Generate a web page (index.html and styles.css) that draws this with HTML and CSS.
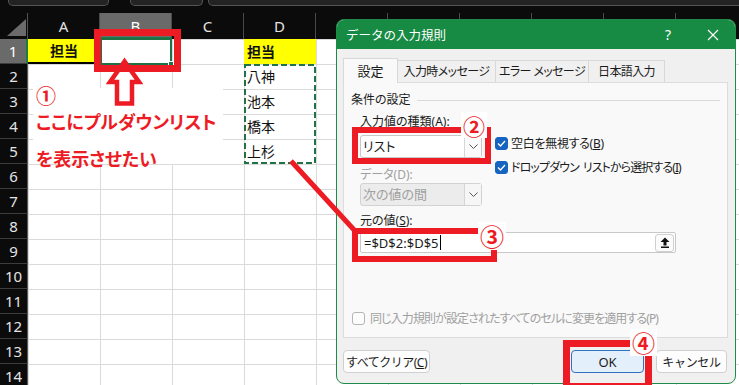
FILE: index.html
```html
<!DOCTYPE html>
<html lang="ja">
<head>
  <meta charset="UTF-8">
  <meta name="viewport" content="width=device-width, initial-scale=1.0">
  <link rel="stylesheet" href="styles.css">
  <title>データの入力規則</title>
</head>
<body>
  <div id="screen">
    <div class="ribbon-edge">
      <div class="ribbon-box box1"></div>
      <div class="ribbon-box box2"></div>
      <div class="ribbon-box box3"></div>
    </div>

    <div class="sheet">
      <div class="corner"><span class="corner-tri"></span></div>
      <div class="col-head">A</div>
      <div class="col-head selected">B</div>
      <div class="col-head">C</div>
      <div class="col-head">D</div>
      <!-- E..J sit under the dialog -->
      <div class="col-head"></div>
      <div class="col-head"></div>
      <div class="col-head"></div>
      <div class="col-head"></div>
      <div class="col-head"></div>
      <div class="col-head"></div>

      <div class="row-head selected">1</div>
      <div class="row-head">2</div>
      <div class="row-head">3</div>
      <div class="row-head">4</div>
      <div class="row-head">5</div>
      <div class="row-head">6</div>
      <div class="row-head">7</div>
      <div class="row-head">8</div>
      <div class="row-head">9</div>
      <div class="row-head">10</div>
      <div class="row-head">11</div>
      <div class="row-head">12</div>
      <div class="row-head">13</div>
      <div class="row-head">14</div>

      <div class="cells"></div>
      <div class="cell a1">担当</div>
      <div class="cell b1"><span class="fill-handle"></span></div>
      <div class="cell d1">担当</div>
      <div class="cell name d2">八神</div>
      <div class="cell name d3">池本</div>
      <div class="cell name d4">橋本</div>
      <div class="cell name d5">上杉</div>
    </div>

    <div class="note">
      <div class="note-num">①</div>
      <div class="note-line">ここにプルダウンリスト</div>
      <div class="note-line second">を表示させたい</div>
    </div>

    <div class="dialog">
      <div class="title-bar">
        <span class="title">データの入力規則</span>
        <span class="help">?</span>
        <span class="close">
          <svg width="12" height="12" viewBox="0 0 12 12"><path d="M1 1L11 11M11 1L1 11" stroke="#fff" stroke-width="1.2" fill="none"/></svg>
        </span>
      </div>
      <div class="dialog-body">
        <div class="tabs">
          <div class="tab active">設定</div>
          <div class="tab w2">入力時メッセージ</div>
          <div class="tab w3">エラー メッセージ</div>
          <div class="tab w4">日本語入力</div>
        </div>
        <div class="panel">
          <div class="group-title">条件の設定</div>
          <div class="conditions">
            <div class="cond-left">
              <div class="label">入力値の種類(<u>A</u>):</div>
              <div class="combo">
                <span class="combo-text">リスト</span>
                <span class="combo-btn"><svg width="9" height="5" viewBox="0 0 9 5"><path d="M0.5 0.5L4.5 4.5L8.5 0.5" stroke="#555" fill="none"/></svg></span>
              </div>
              <div class="label disabled">データ(D):</div>
              <div class="combo disabled">
                <span class="combo-text">次の値の間</span>
                <span class="combo-btn"><svg width="9" height="5" viewBox="0 0 9 5"><path d="M0.5 0.5L4.5 4.5L8.5 0.5" stroke="#555" fill="none"/></svg></span>
              </div>
            </div>
            <div class="cond-right">
              <div class="check-row first">
                <span class="check on"><svg width="9" height="7" viewBox="0 0 9 7"><path d="M1 3.5L3.5 6L8 1" stroke="#fff" stroke-width="1.3" fill="none"/></svg></span>
                <span class="check-text">空白を無視する(<u>B</u>)</span>
              </div>
              <div class="check-row">
                <span class="check on"><svg width="9" height="7" viewBox="0 0 9 7"><path d="M1 3.5L3.5 6L8 1" stroke="#fff" stroke-width="1.3" fill="none"/></svg></span>
                <span class="check-text tight">ドロップダウン<span class="gap"></span>リストから選択する(<u>I</u>)</span>
              </div>
            </div>
          </div>
          <div class="label source-label">元の値(<u>S</u>):</div>
          <div class="source-input">
            <span class="source-text">=$D$2:$D$5</span><span class="caret"></span>
            <span class="ref-btn">
              <svg width="10" height="11" viewBox="0 0 10 11"><path d="M5 0.5L9.5 5H6.5V8.5H3.5V5H0.5Z" fill="#111"/><rect x="1" y="9.5" width="8" height="1.5" fill="#111"/></svg>
            </span>
          </div>
          <div class="check-row apply-all disabled">
            <span class="check"></span>
            <span class="check-text tight">同じ入力規則が設定されたすべてのセルに変更を適用する(P)</span>
          </div>
        </div>
        <div class="buttons">
          <button class="btn clear">すべてクリア(<u>C</u>)</button>
          <button class="btn ok">OK</button>
          <button class="btn cancel">キャンセル</button>
        </div>
      </div>
    </div>

    <!-- red annotations drawn over the screenshot -->
    <svg class="overlay" width="739" height="385" viewBox="0 0 739 385">
      <rect x="245" y="65" width="70" height="98" fill="none" stroke="#217346" stroke-width="2" stroke-dasharray="6 3"/>
      <polygon points="124.5,61.5 110,82 117,82 117,103.5 132,103.5 132,82 139,82" fill="#fff" stroke="#ed1c24" stroke-width="4.5"/>
      <line x1="291" y1="161" x2="356" y2="232" stroke="#ed1c24" stroke-width="5"/>
    </svg>
    <div class="mark mark-b1"></div>
    <div class="mark mark-type"></div>
    <div class="mark mark-source"></div>
    <div class="mark mark-ok"></div>
    <span class="badge badge-2">②</span>
    <span class="badge badge-3">③</span>
    <span class="badge badge-4">④</span>
  </div>
</body>
</html>
```

FILE: styles.css
```css
* {
  box-sizing: border-box;
}

body {
  margin: 0;
  background-color: #0b0b0b;
  font-family: "Noto Sans", "Noto Sans CJK JP", sans-serif;
  font-feature-settings: "palt";
}

#screen {
  position: relative;
  width: 739px;
  height: 385px;
  overflow: hidden;
}

/* ribbon bottom edge */
.ribbon-edge {
  display: flex;
  height: 13px;
}

.ribbon-box {
  height: 6px;
  background-color: #232323;
  border: 1px solid #555;
  border-top: none;
  border-radius: 0 0 5px 5px;
}

.box1 {
  margin-left: 8px;
  width: 101px;
}

.box2 {
  margin-left: 21px;
  width: 73px;
}

.box3 {
  margin-left: 5px;
  flex: 1;
  margin-right: -20px;
}

/* sheet */
.sheet {
  display: grid;
  grid-template-columns: 28px repeat(10, 72px);
  grid-template-rows: 26px repeat(14, 25px);
}

.corner {
  position: relative;
  border-right: 1px solid #555;
}

.corner-tri {
  position: absolute;
  right: 1px;
  bottom: 3px;
  width: 0;
  height: 0;
  border-left: 19px solid transparent;
  border-bottom: 17px solid #6b6b6b;
}

.col-head {
  background-color: #0b0b0b;
  color: #e4e4e4;
  font-size: 15px;
  line-height: 26px;
  text-align: center;
  border-right: 1px solid #4a4a4a;
}

.col-head.selected {
  background-color: #6a6a6a;
  color: #fff;
  border-bottom: 2px solid #1f7a45;
}

.row-head {
  grid-column: 1;
  background-color: #0b0b0b;
  color: #e4e4e4;
  font-size: 15px;
  line-height: 24px;
  text-align: center;
  border-bottom: 1px solid #3c3c3c;
  border-right: 1px solid #5a5a5a;
}

.row-head.selected {
  background-color: #6a6a6a;
  color: #fff;
  border-right: 2px solid #1f7a45;
}

.cells {
  grid-column: 2 / -1;
  grid-row: 2 / -1;
  background-color: #fff;
  background-image:
    linear-gradient(to right, #dadada 1px, transparent 1px),
    linear-gradient(to bottom, #dadada 1px, transparent 1px);
  background-size: 72px 25px;
}

.cell {
  font-family: "Noto Sans CJK JP", sans-serif;
  font-size: 14px;
  line-height: 24px;
  color: #111;
}

.a1 {
  grid-column: 2;
  grid-row: 2;
  background-color: #ffff00;
  border-bottom: 2px solid #000;
  font-weight: bold;
  text-align: center;
  line-height: 23px;
}

.b1 {
  grid-column: 3;
  grid-row: 2;
  position: relative;
  margin: -1px 0 -1px 0;
  border: 2px solid #1e7145;
}

.fill-handle {
  position: absolute;
  right: -4px;
  bottom: -4px;
  width: 6px;
  height: 6px;
  background-color: #1e7145;
  border: 1px solid #fff;
}

.d1 {
  grid-column: 5;
  grid-row: 2;
  background-color: #ffff00;
  font-weight: bold;
  padding-left: 3px;
}

.name {
  grid-column: 5;
  padding-left: 3px;
  line-height: 25px;
}

.d2 { grid-row: 3; }
.d3 { grid-row: 4; }
.d4 { grid-row: 5; }
.d5 { grid-row: 6; }

/* red note */
.note {
  position: absolute;
  left: 33px;
  top: 88px;
  width: 190px;
  height: 76px;
  background-color: #fff;
  padding-left: 3px;
  color: #ed1c24;
  font-family: "Noto Sans CJK JP", sans-serif;
  font-weight: bold;
}

.note-num {
  font-size: 20px;
  line-height: 16px;
}

.note-line {
  margin-top: 7px;
  font-size: 18px;
  line-height: 20px;
}

.note-line.second {
  margin-top: 17px;
}

/* dialog */
.dialog {
  position: absolute;
  left: 336px;
  top: 19px;
  width: 400px;
  height: 365px;
  border: 1px solid #1d8a47;
  border-radius: 8px;
  background-color: #f0f0f0;
  overflow: hidden;
  display: flex;
  flex-direction: column;
  font-size: 12px;
  color: #1b1b1b;
}

.title-bar {
  display: flex;
  align-items: center;
  height: 29px;
  flex: none;
  background-color: #178a43;
  color: #fff;
  padding: 0 11px 0 9px;
}

.title {
  font-family: "Noto Sans CJK JP", sans-serif;
  font-feature-settings: normal;
  font-size: 12.5px;
  margin-right: auto;
}

.help {
  width: 20px;
  text-align: center;
  font-size: 14px;
}

.close {
  width: 22px;
  margin-left: 24px;
  display: flex;
  justify-content: center;
}

.dialog-body {
  flex: 1;
  display: flex;
  flex-direction: column;
  padding: 9px 7px 10px 6px;
}

.tabs {
  display: flex;
  align-items: flex-end;
  height: 24px;
}

.tab {
  height: 22px;
  line-height: 21px;
  text-align: center;
  white-space: nowrap;
  letter-spacing: -0.6px;
  border: 1px solid #d8d8d8;
  border-bottom: none;
  margin-right: -1px;
  background-color: #f0f0f0;
}

.tab.active {
  width: 55px;
  height: 25px;
  line-height: 25px;
  margin-bottom: -1px;
  letter-spacing: 0;
  background-color: #f9f9f9;
  position: relative;
  z-index: 1;
  font-size: 13px;
}

.w2 { width: 99px; }
.w3 { width: 94px; }
.w4 { width: 77px; }

.panel {
  height: 256px;
  display: flex;
  flex-direction: column;
  background-color: #f9f9f9;
  border: 1px solid #dcdcdc;
  padding: 9px 7px 11px 7px;
}

.group-title {
  display: flex;
  align-items: center;
  line-height: 16px;
}

.group-title::after {
  content: "";
  flex: 1;
  height: 1px;
  margin-left: 6px;
  background-color: #dadada;
}

.conditions {
  display: flex;
  margin: 6px 0 0 9px;
}

.cond-left {
  width: 122px;
}

.label {
  line-height: 16px;
}

.disabled {
  color: #a0a0a0;
}

.combo {
  display: flex;
  height: 23px;
  margin: 5px 0 9px 0;
  background-color: #fff;
  border: 1px solid #c8c8c8;
  border-radius: 3px;
}

.combo.disabled {
  margin: 0;
  background-color: #ececec;
  border-color: #d2d2d2;
}

.combo-text {
  flex: 1;
  line-height: 21px;
  padding-left: 2px;
  font-size: 13px;
}

.combo-btn {
  width: 17px;
  display: flex;
  align-items: center;
  justify-content: center;
  border-left: 1px solid #d6d6d6;
  background-color: #fafafa;
}

.combo.disabled .combo-btn {
  background-color: #f6f6f6;
}

.cond-right {
  margin-left: 13px;
}

.check-row {
  display: flex;
  align-items: center;
  height: 16px;
  margin-top: 8px;
  white-space: nowrap;
}

.check-row.first {
  margin-top: 21px;
}

.check-text {
  letter-spacing: -0.3px;
}

.check-text.tight {
  letter-spacing: -0.9px;
}

.gap {
  display: inline-block;
  width: 4px;
}

.check {
  width: 13px;
  height: 13px;
  margin-right: 3px;
  border: 1px solid #8a8a8a;
  border-radius: 3px;
  background-color: #fcfcfc;
  display: flex;
  align-items: center;
  justify-content: center;
}

.check.on {
  border-color: #1464c0;
  background-color: #1464c0;
}

.source-label {
  margin: 7px 0 0 9px;
}

.source-input {
  display: flex;
  align-items: center;
  width: 316px;
  height: 21px;
  margin: 3px 0 0 9px;
  background-color: #fff;
  border: 1px solid #c8c8c8;
  border-radius: 2px;
  font-size: 13px;
}

.source-text {
  padding-left: 3px;
}

.caret {
  width: 1px;
  height: 15px;
  margin-left: 1px;
  background-color: #000;
}

.ref-btn {
  margin-left: auto;
  margin-right: 1px;
  width: 19px;
  height: 18px;
  display: flex;
  align-items: center;
  justify-content: center;
  border: 1px solid #cfcfcf;
  border-radius: 3px;
  background-color: #fbfbfb;
}

.apply-all {
  margin-top: auto;
  margin-left: 1px;
}

.apply-all .check {
  margin-right: 5px;
  border-color: #b5b5b5;
}

.buttons {
  display: flex;
  margin-top: 12px;
  height: 23px;
}

.btn {
  height: 23px;
  padding: 0;
  font-family: inherit;
  font-size: 12px;
  white-space: nowrap;
  color: #1b1b1b;
  background-color: #fdfdfd;
  border: 1px solid #d0d0d0;
  border-radius: 4px;
}

.clear {
  width: 87px;
  letter-spacing: -0.5px;
}

.ok {
  width: 73px;
  margin-left: auto;
  background-color: #e3effa;
  border-color: #2f73c2;
  font-size: 13px;
}

.cancel {
  width: 71px;
  margin-left: 12px;
  margin-right: 1px;
  letter-spacing: -0.3px;
}

/* annotations */
.overlay {
  position: absolute;
  left: 0;
  top: 0;
}

.mark {
  position: absolute;
  border: 6px solid #ed1c24;
}

.mark-b1 {
  left: 94px;
  top: 29px;
  width: 87px;
  height: 43px;
  border-width: 7px;
}

.mark-type {
  left: 352px;
  top: 127px;
  width: 139px;
  height: 37px;
}

.mark-source {
  left: 352px;
  top: 228px;
  width: 145px;
  height: 34px;
}

.mark-ok {
  left: 563px;
  top: 340px;
  width: 89px;
  height: 50px;
  border-width: 7px;
}

.badge {
  position: absolute;
  background-color: #fff;
  color: #ed1c24;
  font-family: "Noto Sans CJK JP", sans-serif;
  font-weight: bold;
  line-height: 1;
  padding: 2px 2px;
}

.badge-2 {
  left: 461px;
  top: 112px;
  font-size: 22px;
}

.badge-3 {
  left: 478px;
  top: 222px;
  font-size: 24px;
}

.badge-4 {
  left: 630px;
  top: 329px;
  font-size: 23px;
}
```
